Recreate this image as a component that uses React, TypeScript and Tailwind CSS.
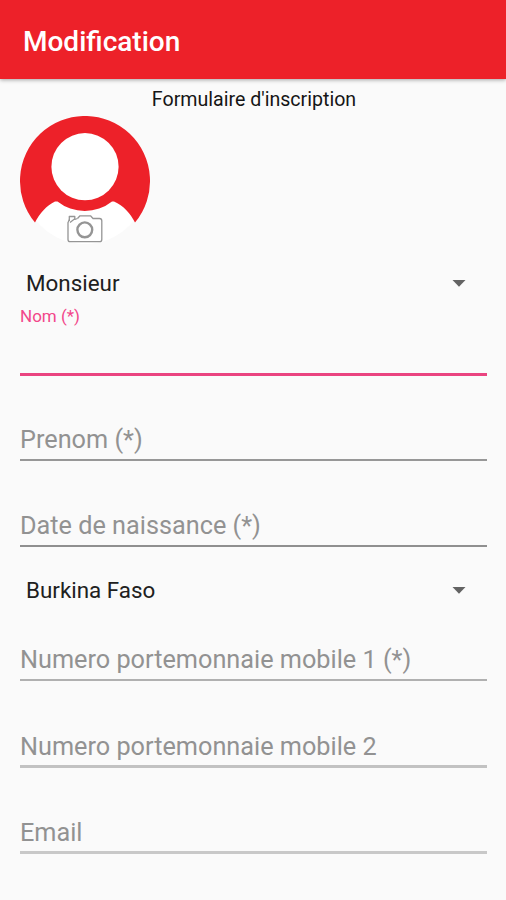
import React from 'react';

const Avatar = () => (
  <svg className="block w-[130px] h-[130px]" viewBox="0 0 130 130" fill="none">
    <circle cx="65" cy="65" r="63" fill="#fff" />
    <path
      d="M15 106.500A65 65 0 1 1 115 106.500C110.500 97.500 103.500 89.500 94 85.500L92 85.500A43.700 43.700 0 0 1 37.500 85.500L35 85.500C26.500 89.500 19.500 97.500 15 106.500Z"
      fill="#ed2129"
    />
    <circle cx="65" cy="50.700" r="33.600" fill="#fff" />
    <g stroke="#959595" strokeWidth="1.300" strokeLinejoin="round">
      <path d="M57.500 102.500L60 99.800H70.500L73 102.500H79.500Q81.800 102.500 81.800 104.800V123.500Q81.800 125.700 79.500 125.700H50.200Q48 125.700 48 123.500V106.500L49.500 103.500" />
      <path d="M49.300 105V100.500H54.800V102.800L50 106.500M54.800 103.500L57.500 102.500" />
      <circle cx="64.800" cy="113.800" r="7.400" strokeWidth="2.400" />
    </g>
  </svg>
);

const Spinner: React.FC<{ value: string }> = ({ value }) => (
  <button type="button" className="flex h-8 w-full items-center justify-between pl-1.5 pr-[21px] text-left">
    <span className="text-[22.400px] leading-8 text-[#202020]">{value}</span>
    <svg className="w-[14px] h-[7px]" viewBox="0 0 14 7">
      <path d="M0.500 0H13.500L7 6.800Z" fill="#636363" />
    </svg>
  </button>
);

const Field: React.FC<{ label: string; labelClass?: string; lineClass: string }> = ({ label, labelClass = 'mb-[3px]', lineClass }) => (
  <div className="flex h-[86px] flex-col justify-end">
    <span className={`${labelClass} text-[25.250px] leading-8 text-[#929292]`}>{label}</span>
    <div className="h-[3px]">
      <div className={lineClass} />
    </div>
  </div>
);

const App: React.FC = () => (
  <div className="flex h-[900px] w-[506px] flex-col overflow-hidden bg-[#fafafa] font-['Roboto',sans-serif]">
    <header className="flex h-[79px] shrink-0 items-center bg-[#ed2129] px-[23px] pt-[5px] shadow-[0_1px_4px_rgba(0,0,0,0.35)]">
      <h1 className="text-[28px] font-medium leading-9 text-white">Modification</h1>
    </header>

    <main className="flex flex-col pl-5 pr-[19px]">
      <h2 className="mt-[9px] pl-px text-center text-[19.600px] leading-6 text-[#151515]">Formulaire d'inscription</h2>
      <div className="mt-1">
        <Avatar />
      </div>

      <div className="mt-[21px]">
        <Spinner value="Monsieur" />
      </div>
      <div className="flex h-[77px] flex-col justify-between pt-[5px]">
        <span className="text-[17px] leading-6 text-[#f2478a]">Nom (*)</span>
        <div className="h-[3px] bg-[#ea4480]" />
      </div>
      <Field label="Prenom (*)" lineClass="h-0.5 bg-[#979797]" />
      <Field label="Date de naissance (*)" lineClass="h-0.5 bg-[#8f8f8f]" />

      <div className="mt-[26px]">
        <Spinner value="Burkina Faso" />
      </div>
      <div className="-mt-[10px]">
        <Field label="Numero portemonnaie mobile 1 (*)" lineClass="h-0.5 bg-[#b0b0b0]" />
        <Field label="Numero portemonnaie mobile 2" labelClass="mb-0.5" lineClass="h-[3px] bg-[#c2c2c2]" />
        <Field label="Email" labelClass="mb-0.5" lineClass="h-[3px] bg-[#c8c8c8]" />
      </div>
    </main>
  </div>
);

export default App;
